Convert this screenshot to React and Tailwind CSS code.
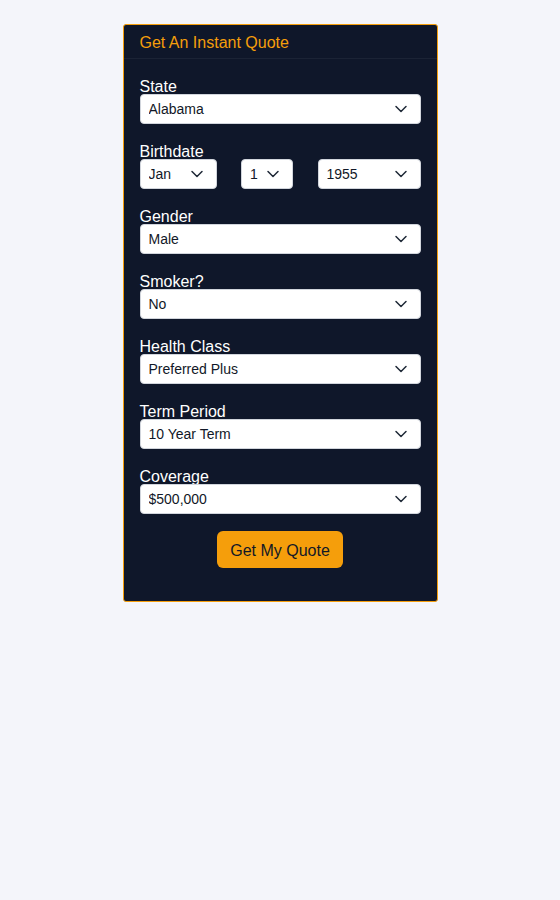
import React from "react";

const FONT = "'Liberation Sans', Arial, sans-serif";

const Chevron = () => (
  <svg
    className="pointer-events-none absolute right-[13px] top-1/2 -translate-y-1/2"
    width="14"
    height="14"
    viewBox="0 0 14 14"
    fill="none"
  >
    <path d="M2 4.5 L7 9.5 L12 4.5" stroke="#1f2937" strokeWidth="1.5" strokeLinecap="round" strokeLinejoin="round" />
  </svg>
);

function Select({ options, value, className = "" }) {
  return (
    <div className={`relative ${className}`}>
      <select
        defaultValue={value}
        className="block h-[30px] w-full appearance-none rounded-[4px] border border-gray-300 bg-white pl-[8px] pr-8 text-[14px] text-[#111827] outline-none"
        style={{ fontFamily: FONT }}
      >
        {options.map((o) => (
          <option key={o}>{o}</option>
        ))}
      </select>
      <Chevron />
    </div>
  );
}

function Field({ label, children, last }) {
  return (
    <div className={last ? "mb-[17px]" : "mb-[19px]"}>
      <div className="h-4 text-[16px] leading-[18px] text-white">{label}</div>
      {children}
    </div>
  );
}

export default function App() {
  return (
    <div className="min-h-[900px] w-full bg-[#f4f5fa] pt-6" style={{ fontFamily: FONT }}>
      <div className="mx-auto w-[315px] overflow-hidden rounded-[3px] border border-[#f59e0b] bg-[#0f172a]">
        <div className="flex h-[34px] items-center border-b border-white/[0.05] px-4 pt-[2px] text-[16px] text-[#f59e0b]">
          Get An Instant Quote
        </div>
        <div className="px-4 pt-[19px] pb-[33px]">
          <Field label="State">
            <Select options={["Alabama", "Alaska", "Arizona"]} value="Alabama" />
          </Field>
          <Field label="Birthdate">
            <div className="flex justify-between">
              <Select className="w-[77px]" options={["Jan", "Feb", "Mar"]} value="Jan" />
              <Select className="w-[52px]" options={["1", "2", "3"]} value="1" />
              <Select className="w-[103px]" options={["1955", "1956"]} value="1955" />
            </div>
          </Field>
          <Field label="Gender">
            <Select options={["Male", "Female"]} value="Male" />
          </Field>
          <Field label="Smoker?">
            <Select options={["No", "Yes"]} value="No" />
          </Field>
          <Field label="Health Class">
            <Select options={["Preferred Plus", "Preferred", "Standard"]} value="Preferred Plus" />
          </Field>
          <Field label="Term Period">
            <Select options={["10 Year Term", "20 Year Term"]} value="10 Year Term" />
          </Field>
          <Field label="Coverage" last>
            <Select options={["$500,000", "$1,000,000"]} value="$500,000" />
          </Field>
          <div className="flex justify-center">
            <button className="h-[37px] w-[126px] rounded-[6px] bg-[#f59e0b] pt-[2px] text-[16px] text-[#111827]">
              Get My Quote
            </button>
          </div>
        </div>
      </div>
    </div>
  );
}
